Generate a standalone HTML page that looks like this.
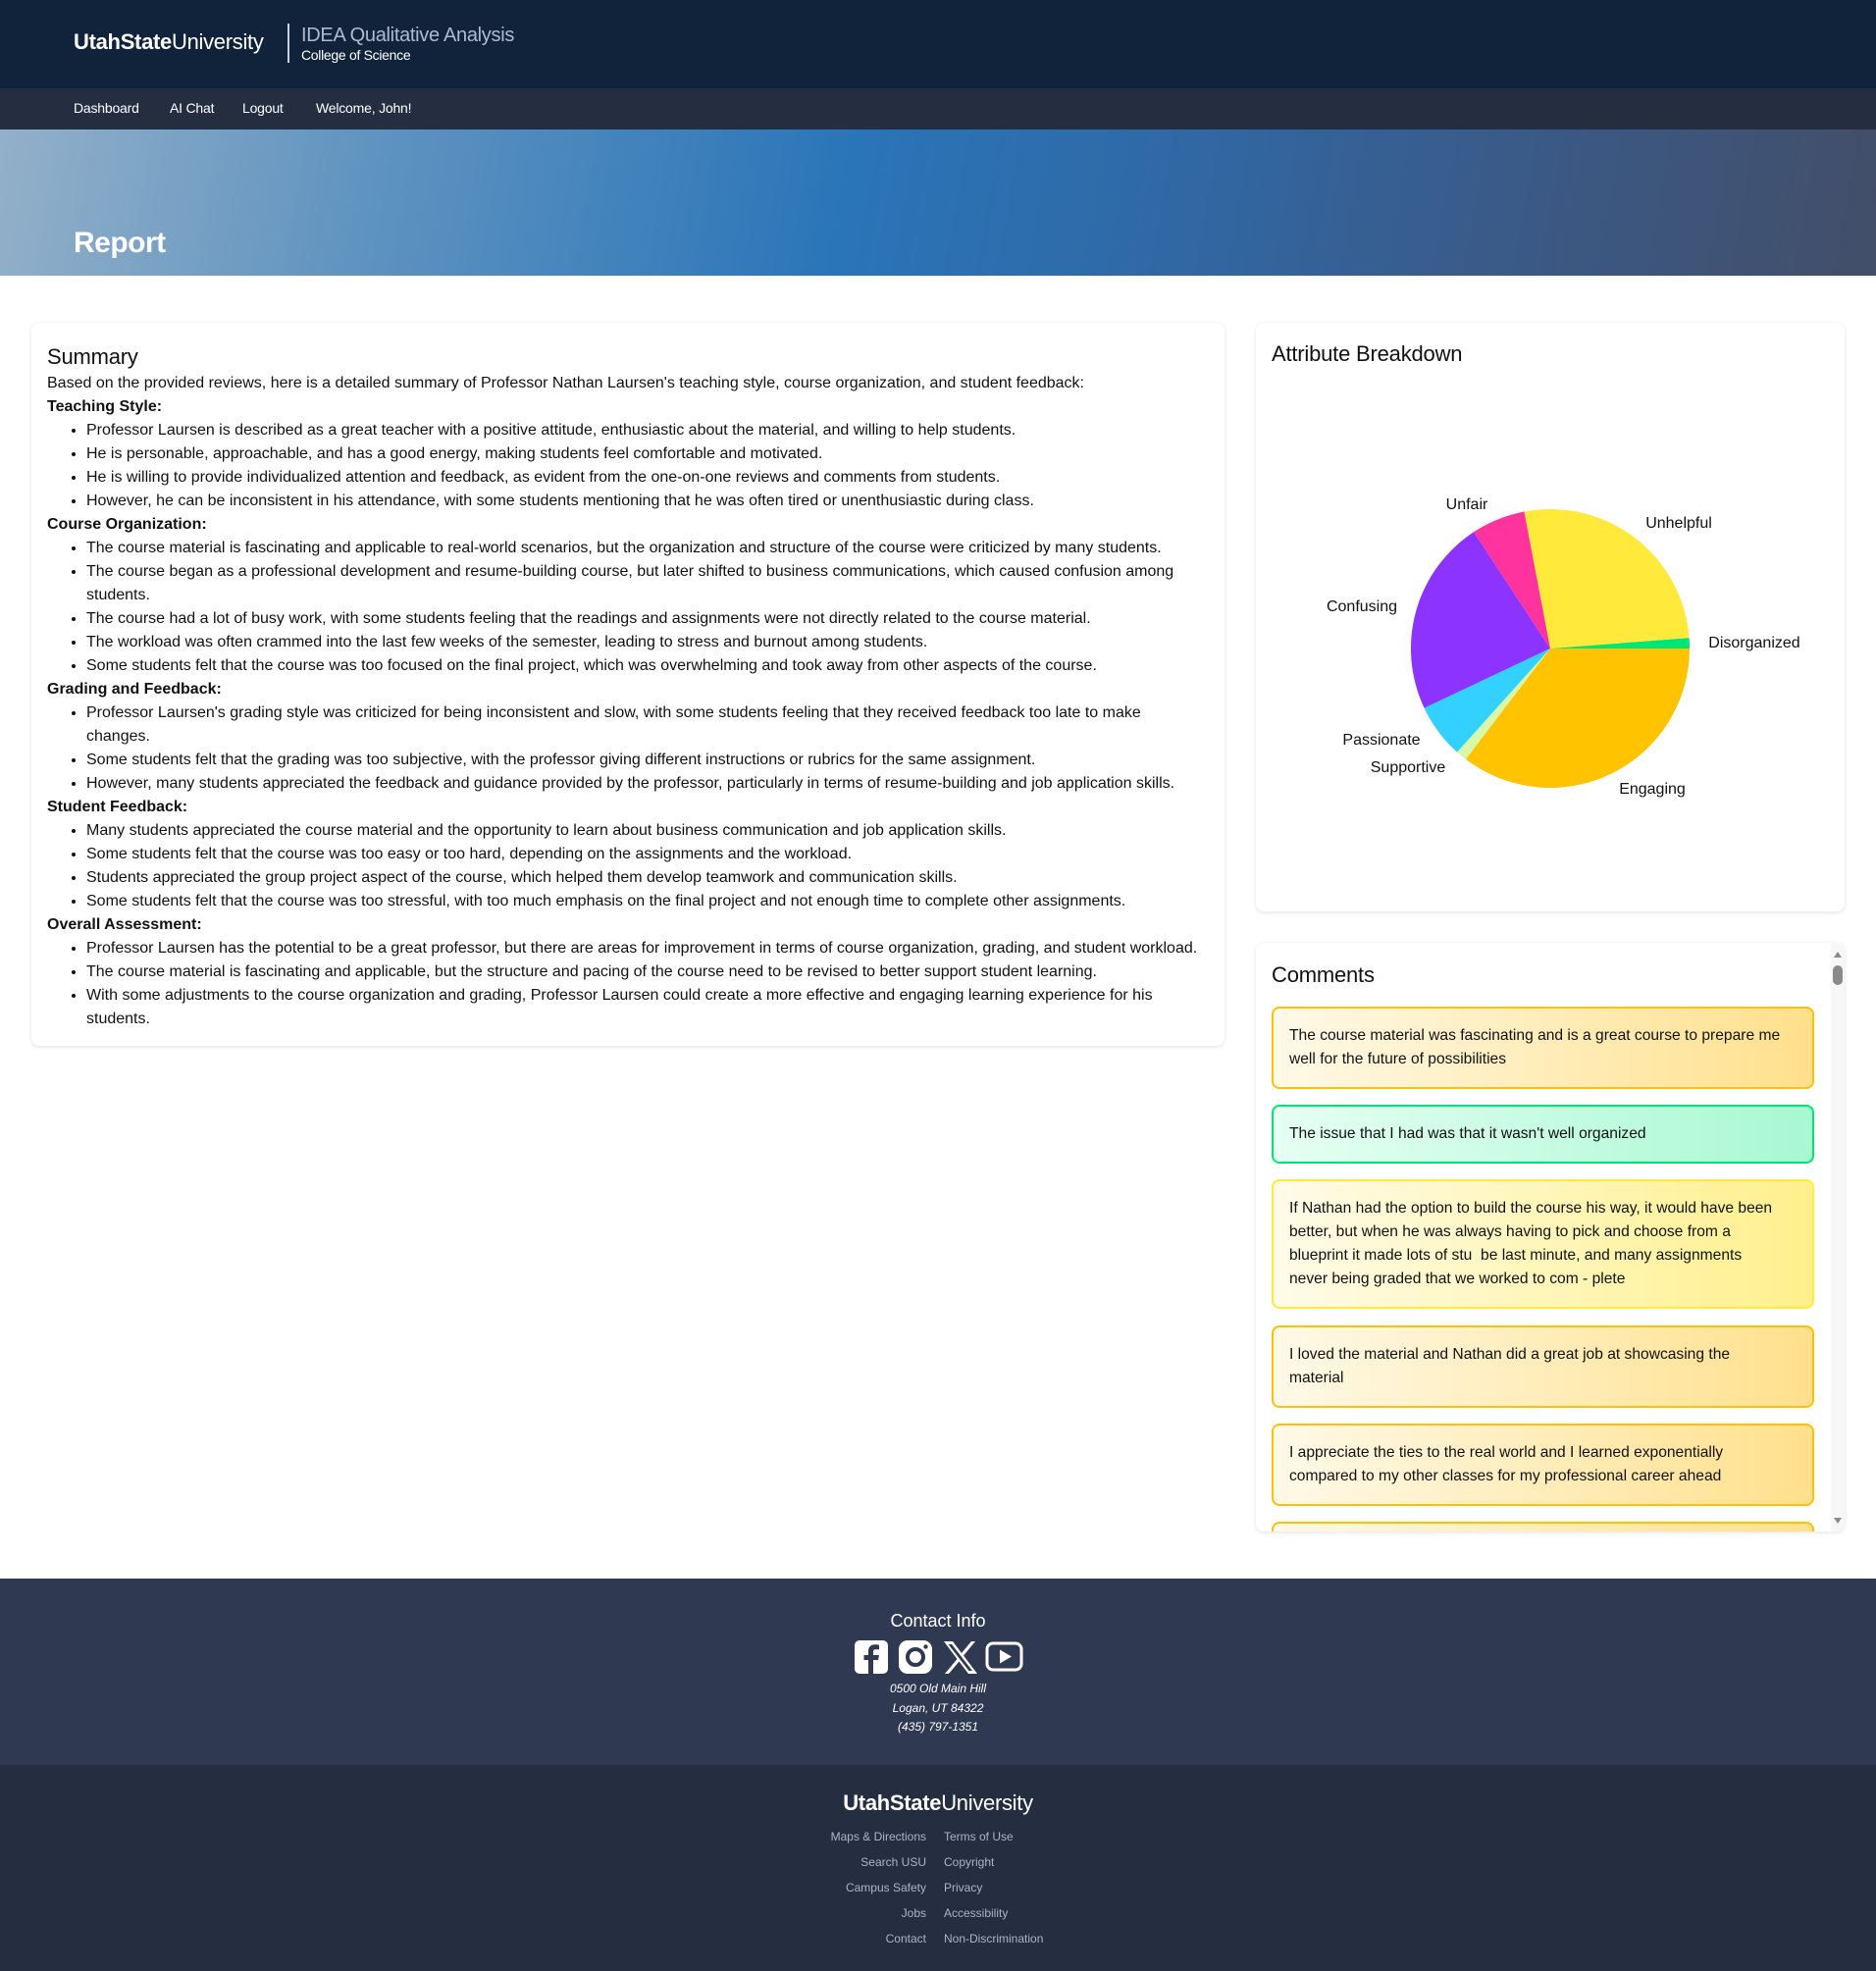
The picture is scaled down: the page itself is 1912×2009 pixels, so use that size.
<!DOCTYPE html>
<html><head><meta charset="utf-8"><style>
*{box-sizing:border-box;margin:0;padding:0}
body{width:1912px;height:2009px;position:relative;font-family:"Liberation Sans",sans-serif;background:#fff;color:#111;overflow:hidden}
.abs{position:absolute}
#hdr{left:0;top:0;width:1912px;height:90px;background:#10233a}
#nav{left:0;top:90px;width:1912px;height:42px;background:#252e41}
#nav span{position:absolute;top:12px;color:#fff;font-size:14px;letter-spacing:-0.2px}
#hero{left:0;top:132px;width:1912px;height:149px;background:linear-gradient(100deg,#93b0c9 0%,#5f93c0 20%,#2a75b8 45%,#2f6aa8 60%,#3a5a88 80%,#434e68 100%)}
.card{position:absolute;background:#fff;border-radius:8px;box-shadow:0 1px 4px rgba(0,0,0,.12)}
.h{font-size:22px;color:#111;letter-spacing:-0.2px}
#sum{left:32px;top:329px;width:1216px;height:737px;padding:23px 8px 0 16px;font-size:16px;line-height:24px;white-space:nowrap}
#sum ul{padding-left:40px;list-style:disc}
#sum b{font-weight:bold}
.cm{position:absolute;left:16px;width:553px;border:2px solid #ffc107;border-radius:8px;padding:16px 16px;font-size:15.6px;line-height:24px;background:linear-gradient(90deg,#fff9e8,#ffe08c);white-space:nowrap}
.g{border-color:#00e676;background:linear-gradient(90deg,#e6fff3,#a8f8d2)}
.y{border-color:#ffeb3b;background:linear-gradient(90deg,#fffbe8,#fff08c)}
#f1{left:0;top:1609px;width:1912px;height:190px;background:#2f3a52;color:#fff;text-align:center}
#f2{left:0;top:1799px;width:1912px;height:210px;background:#252e40;color:#fff}
.lk{position:absolute;font-size:12px;color:#aab4c7}
</style></head><body>
<div id="hdr" class="abs">
 <div class="abs" style="left:75px;top:30px;font-size:22px;color:#fff;letter-spacing:-0.3px"><b>UtahState</b>University</div>
 <div class="abs" style="left:293px;top:24px;width:2px;height:40px;background:#c9d1dc"></div>
 <div class="abs" style="left:307px;top:25px;font-size:20px;color:#aebbcd;letter-spacing:-0.3px">IDEA Qualitative Analysis</div>
 <div class="abs" style="left:307px;top:48px;font-size:14px;color:#fff;letter-spacing:-0.3px">College of Science</div>
</div>
<div id="nav" class="abs"><span style="left:75px">Dashboard</span><span style="left:173px">AI Chat</span><span style="left:247px">Logout</span><span style="left:322px">Welcome, John!</span></div>
<div id="hero" class="abs"><div class="abs" style="left:75px;top:99px;font-size:30px;font-weight:bold;color:#fff;letter-spacing:-0.5px">Report</div></div>

<div id="sum" class="card">
<div class="h" style="margin-bottom:3px">Summary</div>
<div>Based on the provided reviews, here is a detailed summary of Professor Nathan Laursen's teaching style, course organization, and student feedback:</div>
<b>Teaching Style:</b>
<ul><li>Professor Laursen is described as a great teacher with a positive attitude, enthusiastic about the material, and willing to help students.</li>
<li>He is personable, approachable, and has a good energy, making students feel comfortable and motivated.</li>
<li>He is willing to provide individualized attention and feedback, as evident from the one-on-one reviews and comments from students.</li>
<li>However, he can be inconsistent in his attendance, with some students mentioning that he was often tired or unenthusiastic during class.</li></ul>
<b>Course Organization:</b>
<ul><li>The course material is fascinating and applicable to real-world scenarios, but the organization and structure of the course were criticized by many students.</li>
<li>The course began as a professional development and resume-building course, but later shifted to business communications, which caused confusion among<br>students.</li>
<li>The course had a lot of busy work, with some students feeling that the readings and assignments were not directly related to the course material.</li>
<li>The workload was often crammed into the last few weeks of the semester, leading to stress and burnout among students.</li>
<li>Some students felt that the course was too focused on the final project, which was overwhelming and took away from other aspects of the course.</li></ul>
<b>Grading and Feedback:</b>
<ul><li>Professor Laursen's grading style was criticized for being inconsistent and slow, with some students feeling that they received feedback too late to make<br>changes.</li>
<li>Some students felt that the grading was too subjective, with the professor giving different instructions or rubrics for the same assignment.</li>
<li>However, many students appreciated the feedback and guidance provided by the professor, particularly in terms of resume-building and job application skills.</li></ul>
<b>Student Feedback:</b>
<ul><li>Many students appreciated the course material and the opportunity to learn about business communication and job application skills.</li>
<li>Some students felt that the course was too easy or too hard, depending on the assignments and the workload.</li>
<li>Students appreciated the group project aspect of the course, which helped them develop teamwork and communication skills.</li>
<li>Some students felt that the course was too stressful, with too much emphasis on the final project and not enough time to complete other assignments.</li></ul>
<b>Overall Assessment:</b>
<ul><li>Professor Laursen has the potential to be a great professor, but there are areas for improvement in terms of course organization, grading, and student workload.</li>
<li>The course material is fascinating and applicable, but the structure and pacing of the course need to be revised to better support student learning.</li>
<li>With some adjustments to the course organization and grading, Professor Laursen could create a more effective and engaging learning experience for his<br>students.</li></ul>
</div>

<div class="card" style="left:1280px;top:329px;width:600px;height:600px">
<div class="h abs" style="left:16px;top:19px">Attribute Breakdown</div>
<svg class="abs" style="left:0;top:0" width="600" height="600" font-family="Liberation Sans, sans-serif" font-size="16" fill="#111">
<path d="M300 332 L442 332 A142 142 0 0 0 441.6 321.1 Z" fill="#00e676"/>
<path d="M300 332 L441.6 321.1 A142 142 0 0 0 273.4 192.5 Z" fill="#ffea3b"/>
<path d="M300 332 L273.4 192.5 A142 142 0 0 0 222 213.3 Z" fill="#ff339e"/>
<path d="M300 332 L222 213.3 A142 142 0 0 0 171.6 392.7 Z" fill="#8c33ff"/>
<path d="M300 332 L171.6 392.7 A142 142 0 0 0 205.1 437.7 Z" fill="#33d1ff"/>
<path d="M300 332 L205.1 437.7 A142 142 0 0 0 213.9 444.9 Z" fill="#d9f7a8"/>
<path d="M300 332 L213.9 444.9 A142 142 0 0 0 442 332 Z" fill="#ffc300"/>
<g text-anchor="middle" dominant-baseline="middle">
<text x="215" y="186">Unfair</text><text x="431" y="205">Unhelpful</text><text x="108" y="290">Confusing</text>
<text x="508" y="327">Disorganized</text><text x="128" y="426">Passionate</text><text x="155" y="454">Supportive</text><text x="404" y="476">Engaging</text></g>
</svg>
</div>

<div class="card" style="left:1280px;top:961px;width:600px;height:600px;overflow:hidden">
<div class="h abs" style="left:16px;top:20px">Comments</div>
<div class="cm" style="top:65px;height:84px">The course material was fascinating and is a great course to prepare me<br>well for the future of possibilities</div>
<div class="cm g" style="top:165px;height:60px">The issue that I had was that it wasn't well organized</div>
<div class="cm y" style="top:241px;height:132px">If Nathan had the option to build the course his way, it would have been<br>better, but when he was always having to pick and choose from a<br>blueprint it made lots of stu&nbsp; be last minute, and many assignments<br>never being graded that we worked to com - plete</div>
<div class="cm" style="top:390px;height:84px">I loved the material and Nathan did a great job at showcasing the<br>material</div>
<div class="cm" style="top:490px;height:84px">I appreciate the ties to the real world and I learned exponentially<br>compared to my other classes for my professional career ahead</div>
<div class="cm" style="top:590px;height:60px"></div>
<div class="abs" style="left:586px;top:0;width:14px;height:600px;background:#f7f7f7"></div>
<div class="abs" style="left:588px;top:23px;width:10px;height:20px;border-radius:5px;background:#8a8a8a"></div>
<div class="abs" style="left:589px;top:9px;width:0;height:0;border-left:4px solid transparent;border-right:4px solid transparent;border-bottom:6px solid #8a8a8a"></div>
<div class="abs" style="left:589px;top:586px;width:0;height:0;border-left:4px solid transparent;border-right:4px solid transparent;border-top:6px solid #8a8a8a"></div>
</div>

<div id="f1" class="abs">
<div class="abs" style="left:0;width:1912px;top:33px;font-size:18px">Contact Info</div>
<svg class="abs" style="left:871px;top:62px" width="172" height="36" fill="#fff">
<rect x="0" y="1" width="34" height="34" rx="5"/>
<path d="M19 35 V21 H24 L25 16 H19 V12.5 C19 11 19.8 10.3 21.3 10.3 H25 V5.7 C24 5.5 22.4 5.3 20.8 5.3 C16.5 5.3 14 7.8 14 12 V16 H9.5 V21 H14 V35 Z" fill="#2f3a52"/>
<rect x="45" y="1" width="34" height="34" rx="9"/>
<circle cx="62" cy="18" r="8" fill="none" stroke="#2f3a52" stroke-width="4"/>
<circle cx="72.5" cy="7.5" r="2.2" fill="#2f3a52"/>
<path d="M91 2 H100 L109 14 L119 2 H123 L111 16.5 L125 35 H116 L106.5 22.5 L96 35 H92 L104.5 20 Z"/>
<path d="M95.5 5 H99 L120 32 H116.5 Z" fill="#2f3a52"/>
<rect x="135" y="4" width="35" height="27" rx="6" fill="none" stroke="#fff" stroke-width="3"/>
<path d="M148 10.5 L160 17.5 L148 24.5 Z"/>
</svg>
<div class="abs" style="left:0;width:1912px;top:103px;font-size:12px;font-style:italic;line-height:19.5px">0500 Old Main Hill<br>Logan, UT 84322<br>(435) 797-1351</div>
</div>

<div id="f2" class="abs">
<div class="abs" style="left:0;width:1912px;top:26px;text-align:center;font-size:22px;letter-spacing:-0.3px"><b>UtahState</b>University</div>
<div class="lk" style="right:968px;top:60px;text-align:right;line-height:26px">Maps &amp; Directions<br>Search USU<br>Campus Safety<br>Jobs<br>Contact</div>
<div class="lk" style="left:962px;top:60px;line-height:26px">Terms of Use<br>Copyright<br>Privacy<br>Accessibility<br>Non-Discrimination</div>
</div>
</body></html>
